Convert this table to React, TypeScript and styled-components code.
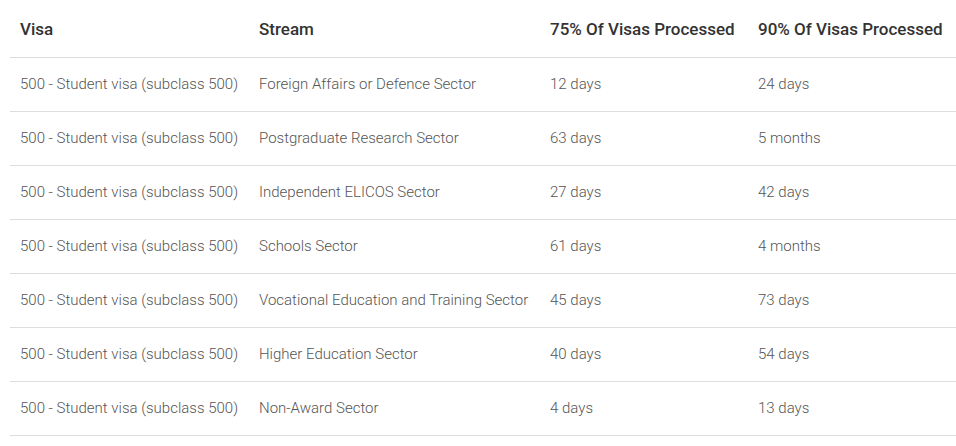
import styled, { createGlobalStyle } from "styled-components";

const GlobalStyle = createGlobalStyle`
  body {
    margin: 0;
    padding: 0 0 0 10px;
    background: #ffffff;
    font-family: Roboto, "Liberation Sans", sans-serif;
  }
`;

const Table = styled.table`
  width: 946px;
  border-collapse: collapse;
  table-layout: fixed;
`;

const HeadCell = styled.th<{ $width: number }>`
  width: ${(p) => p.$width}px;
  height: 57px;
  padding: 2px 10px 0;
  box-sizing: border-box;
  text-align: left;
  font-size: 17px;
  font-weight: 500;
  color: #333333;
  border-bottom: 1px solid #dddddd;
  white-space: nowrap;
`;

const Row = styled.tr`
  border-bottom: 1px solid #dddddd;
`;

const Cell = styled.td`
  height: 53px;
  padding: 0 10px;
  font-size: 15px;
  font-weight: 300;
  color: #555555;
  white-space: nowrap;
`;

const columns = [
  { label: "Visa", width: 239 },
  { label: "Stream", width: 291 },
  { label: "75% Of Visas Processed", width: 208 },
  { label: "90% Of Visas Processed", width: 208 },
];

const rows = [
  ["Foreign Affairs or Defence Sector", "12 days", "24 days"],
  ["Postgraduate Research Sector", "63 days", "5 months"],
  ["Independent ELICOS Sector", "27 days", "42 days"],
  ["Schools Sector", "61 days", "4 months"],
  ["Vocational Education and Training Sector", "45 days", "73 days"],
  ["Higher Education Sector", "40 days", "54 days"],
  ["Non-Award Sector", "4 days", "13 days"],
];

export default function App() {
  return (
    <>
      <GlobalStyle />
      <Table>
        <thead>
          <tr>
            {columns.map((c) => (
              <HeadCell key={c.label} $width={c.width}>
                {c.label}
              </HeadCell>
            ))}
          </tr>
        </thead>
        <tbody>
          {rows.map((r) => (
            <Row key={r[0]}>
              <Cell>500 - Student visa (subclass 500)</Cell>
              <Cell>{r[0]}</Cell>
              <Cell>{r[1]}</Cell>
              <Cell>{r[2]}</Cell>
            </Row>
          ))}
        </tbody>
      </Table>
    </>
  );
}
